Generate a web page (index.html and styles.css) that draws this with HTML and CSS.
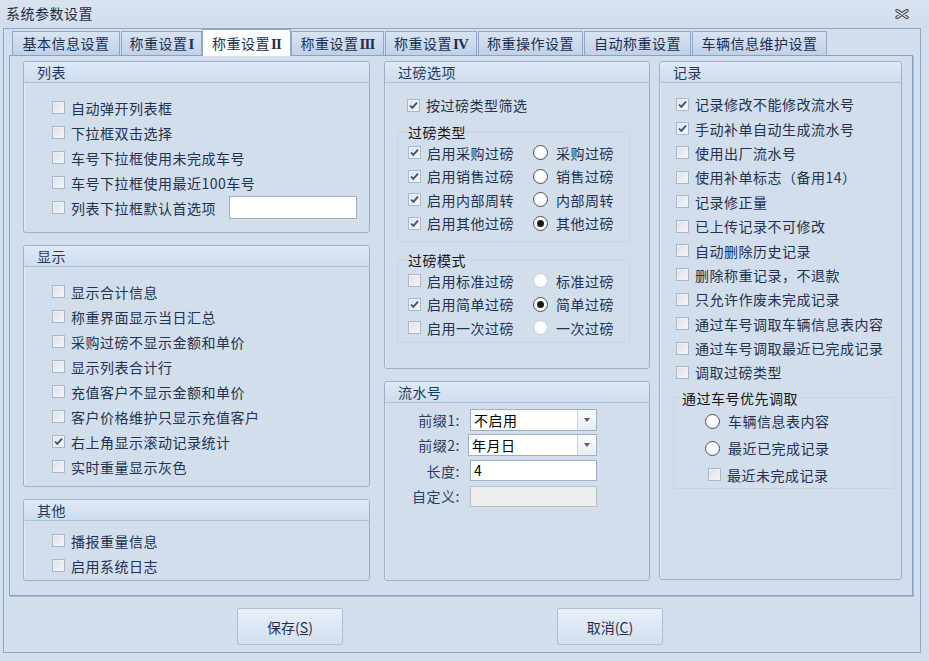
FILE: index.html
```html
<!DOCTYPE html>
<html lang="zh-CN">
<head>
<meta charset="utf-8">
<title>系统参数设置</title>
<link rel="stylesheet" href="styles.css">
</head>
<body>
<div class="titlebar">
  <span class="title">系统参数设置</span>
  <span class="close"><svg viewBox="0 0 14 10" width="14" height="10"><path d="M2 1.5L12 8.5M12 1.5L2 8.5" stroke="#4a4f58" stroke-width="3.4" stroke-linecap="round"/><path d="M2 1.5L12 8.5M12 1.5L2 8.5" stroke="#e4e9f0" stroke-width="1.3" stroke-linecap="round"/></svg></span>
</div>
<div class="frame">
  <div class="tabs">
    <div class="tab t1">基本信息设置</div>
    <div class="tab t2">称重设置<span class="rn">I</span></div>
    <div class="tab t3 active">称重设置<span class="rn">II</span></div>
    <div class="tab t4">称重设置<span class="rn">III</span></div>
    <div class="tab t5">称重设置<span class="rn">IV</span></div>
    <div class="tab t6">称重操作设置</div>
    <div class="tab t7">自动称重设置</div>
    <div class="tab t8">车辆信息维护设置</div>
  </div>
  <div class="page">
    <div class="col c1">
      <section class="grp g-list">
        <div class="grp-h">列表</div>
        <div class="grp-b pl28 pt12">
          <div class="row"><span class="cb"></span>自动弹开列表框</div>
          <div class="row"><span class="cb"></span>下拉框双击选择</div>
          <div class="row"><span class="cb"></span>车号下拉框使用未完成车号</div>
          <div class="row"><span class="cb"></span>车号下拉框使用最近100车号</div>
          <div class="row"><span class="cb"></span>列表下拉框默认首选项<span class="inp list-inp"></span></div>
        </div>
      </section>
      <section class="grp g-show">
        <div class="grp-h">显示</div>
        <div class="grp-b pl28 pt12">
          <div class="row"><span class="cb"></span>显示合计信息</div>
          <div class="row"><span class="cb"></span>称重界面显示当日汇总</div>
          <div class="row"><span class="cb"></span>采购过磅不显示金额和单价</div>
          <div class="row"><span class="cb"></span>显示列表合计行</div>
          <div class="row"><span class="cb"></span>充值客户不显示金额和单价</div>
          <div class="row"><span class="cb"></span>客户价格维护只显示充值客户</div>
          <div class="row"><span class="cb on"><svg viewBox="0 0 11 11"><path d="M2 5.5l2.3 2.4L9 2.6"/></svg></span>右上角显示滚动记录统计</div>
          <div class="row"><span class="cb"></span>实时重量显示灰色</div>
        </div>
      </section>
      <section class="grp g-other">
        <div class="grp-h">其他</div>
        <div class="grp-b pl28 pt7">
          <div class="row"><span class="cb"></span>播报重量信息</div>
          <div class="row"><span class="cb"></span>启用系统日志</div>
        </div>
      </section>
    </div>
    <div class="col c2">
      <section class="grp g-weigh">
        <div class="grp-h">过磅选项</div>
        <div class="grp-b pl22 pt10">
          <div class="row r24"><span class="cb on"><svg viewBox="0 0 11 11"><path d="M2 5.5l2.3 2.4L9 2.6"/></svg></span>按过磅类型筛选</div>
          <fieldset class="sub sub-type">
            <legend>过磅类型</legend>
            <div class="row r23"><span class="opt"><span class="cb on"><svg viewBox="0 0 11 11"><path d="M2 5.5l2.3 2.4L9 2.6"/></svg></span>启用采购过磅</span><span class="rd"></span>采购过磅</div>
            <div class="row r23"><span class="opt"><span class="cb on"><svg viewBox="0 0 11 11"><path d="M2 5.5l2.3 2.4L9 2.6"/></svg></span>启用销售过磅</span><span class="rd"></span>销售过磅</div>
            <div class="row r23"><span class="opt"><span class="cb on"><svg viewBox="0 0 11 11"><path d="M2 5.5l2.3 2.4L9 2.6"/></svg></span>启用内部周转</span><span class="rd"></span>内部周转</div>
            <div class="row r23"><span class="opt"><span class="cb on"><svg viewBox="0 0 11 11"><path d="M2 5.5l2.3 2.4L9 2.6"/></svg></span>启用其他过磅</span><span class="rd on"></span>其他过磅</div>
          </fieldset>
          <fieldset class="sub sub-mode">
            <legend>过磅模式</legend>
            <div class="row r23"><span class="opt"><span class="cb"></span>启用标准过磅</span><span class="rd dis"></span>标准过磅</div>
            <div class="row r23"><span class="opt"><span class="cb on"><svg viewBox="0 0 11 11"><path d="M2 5.5l2.3 2.4L9 2.6"/></svg></span>启用简单过磅</span><span class="rd on"></span>简单过磅</div>
            <div class="row r23"><span class="opt"><span class="cb"></span>启用一次过磅</span><span class="rd dis"></span>一次过磅</div>
          </fieldset>
        </div>
      </section>
      <section class="grp g-serial">
        <div class="grp-h">流水号</div>
        <div class="grp-b sn">
          <label>前缀1:</label>
          <div class="combo"><span class="val">不启用</span><span class="dd"></span></div>
          <label>前缀2:</label>
          <div class="combo shift"><span class="val">年月日</span><span class="dd"></span></div>
          <label>长度:</label>
          <div class="inp">4</div>
          <label>自定义:</label>
          <div class="inp dis"></div>
        </div>
      </section>
    </div>
    <div class="col c3">
      <section class="grp g-rec">
        <div class="grp-h">记录</div>
        <div class="grp-b pl16 pt9">
          <div class="row r24b"><span class="cb on"><svg viewBox="0 0 11 11"><path d="M2 5.5l2.3 2.4L9 2.6"/></svg></span>记录修改不能修改流水号</div>
          <div class="row r24b"><span class="cb on"><svg viewBox="0 0 11 11"><path d="M2 5.5l2.3 2.4L9 2.6"/></svg></span>手动补单自动生成流水号</div>
          <div class="row r24b"><span class="cb"></span>使用出厂流水号</div>
          <div class="row r24b"><span class="cb"></span>使用补单标志（备用14）</div>
          <div class="row r24b"><span class="cb"></span>记录修正量</div>
          <div class="row r24b"><span class="cb"></span>已上传记录不可修改</div>
          <div class="row r24b"><span class="cb"></span>自动删除历史记录</div>
          <div class="row r24b"><span class="cb"></span>删除称重记录，不退款</div>
          <div class="row r24b"><span class="cb"></span>只允许作废未完成记录</div>
          <div class="row r24b"><span class="cb"></span>通过车号调取车辆信息表内容</div>
          <div class="row r24b"><span class="cb"></span>通过车号调取最近已完成记录</div>
          <div class="row r24b"><span class="cb"></span>调取过磅类型</div>
          <fieldset class="sub sub-pref">
            <legend>通过车号优先调取</legend>
            <div class="row r27 ind-r"><span class="rd"></span>车辆信息表内容</div>
            <div class="row r27 ind-r"><span class="rd"></span>最近已完成记录</div>
            <div class="row r26 ind-c"><span class="cb"></span>最近未完成记录</div>
          </fieldset>
        </div>
      </section>
    </div>
  </div>
  <div class="buttons">
    <button class="btn">保存(<u>S</u>)</button>
    <button class="btn">取消(<u>C</u>)</button>
  </div>
</div>
</body>
</html>
```
FILE: styles.css
```css
* { box-sizing: border-box; }
html, body { margin: 0; padding: 0; }
body {
  width: 929px;
  height: 661px;
  overflow: hidden;
  background: #d4dfee;
  font-family: "Noto Sans CJK SC", "Noto Sans", sans-serif;
  font-size: 14px;
  letter-spacing: 0.5px;
  line-height: 18px;
  color: #22324f;
}

.titlebar {
  height: 28px;
  display: flex;
  align-items: center;
  justify-content: space-between;
  padding: 0 20px 2px 6px;
  background: linear-gradient(#d9e3f0, #d2ddec);
}
.title { color: #1e2b44; }
.close { display: flex; width: 14px; height: 10px; margin-top: 1px; }

.frame {
  margin: 0 8px 0 3px;
  height: 625px;
  border: 1px solid #8fa6c6;
  background: #d4dfee;
}

.tabs {
  display: flex;
  align-items: flex-end;
  height: 26px;
  padding-left: 8px;
}
.tab {
  height: 24px;
  margin-right: 1px;
  border: 1px solid #8ea7c8;
  border-bottom: none;
  background: linear-gradient(#d9e4f2, #c0d1e8);
  line-height: 22px;
  text-align: center;
  color: #1d2f4e;
  white-space: nowrap;
}
.t1 { width: 108px; }
.t2 { width: 81px; }
.t3 { width: 89px; margin-right: 0; margin-left: -1px; }
.t4 { width: 93px; }
.t5 { width: 92px; }
.t6 { width: 105px; }
.t7 { width: 107px; }
.t8 { width: 135px; }
.tab.active {
  height: 27px;
  margin-bottom: -1px;
  background: #fff;
  line-height: 26px;
  position: relative;
  z-index: 1;
}
.rn {
  font-family: "Liberation Serif", serif;
  font-weight: bold;
  font-size: 15px;
  letter-spacing: -0.8px;
  margin-left: 1px;
}

.page {
  display: flex;
  margin: 0 7px 0 5px;
  height: 541px;
  padding: 5px 0 0 13px;
  border: 1px solid #8aa2c2;
  box-shadow: 1px 1px 0 #a7bad4;
  background: #d3deed;
}
.col { display: flex; flex-direction: column; gap: 12px; }
.c1 { width: 347px; margin-right: 14px; }
.c2 { width: 266px; margin-right: 9px; }
.c3 { width: 243px; }

.grp {
  border: 1px solid #9db1cd;
  border-radius: 3px;
  background: #d3deed;
  box-shadow: inset 1px 1px 0 #e2eaf5;
}
.grp-h {
  height: 21px;
  line-height: 20px;
  padding-left: 13px;
  border-bottom: 1px solid #aec1da;
  border-radius: 2px 2px 0 0;
  background: linear-gradient(#e0eaf7, #cddcef);
  color: #1f3a5d;
}
.g-list { height: 172px; }
.g-show { height: 242px; }
.g-other { height: 82px; }
.g-weigh { height: 308px; }
.g-serial { height: 200px; }
.g-rec { height: 519px; }

.pl28 { padding-left: 28px; }
.pl22 { padding-left: 22px; }
.pl16 { padding-left: 16px; }
.pt12 { padding-top: 12px; }
.pt10 { padding-top: 10px; }
.pt9 { padding-top: 9px; }
.pt7 { padding-top: 7px; }

.row {
  display: flex;
  align-items: center;
  height: 25px;
  white-space: nowrap;
}
.r24 { height: 24px; }
.r23 { height: 23.5px; }
.r24b { height: 24.4px; }
.r27 { height: 27px; }
.r26 { height: 26px; }
.opt { display: flex; align-items: center; width: 125px; }

.cb {
  flex: none;
  display: flex;
  align-items: center;
  justify-content: center;
  width: 13px;
  height: 13px;
  margin-right: 6px;
  border: 1px solid #aab7c9;
  background: linear-gradient(135deg, #dce1e8, #f6f7f9);
  box-shadow: inset 0 0 0 1px #eef1f5;
}
.cb svg { width: 11px; height: 11px; }
.cb svg path {
  fill: none;
  stroke: #3d4e70;
  stroke-width: 1.8;
}

.rd {
  flex: none;
  display: flex;
  align-items: center;
  justify-content: center;
  width: 15px;
  height: 15px;
  margin-right: 8px;
  border: 1.5px solid #505358;
  border-radius: 50%;
  background: radial-gradient(circle at 40% 35%, #ffffff 45%, #e2e4e8);
}
.rd.on::after {
  content: "";
  width: 7px;
  height: 7px;
  border-radius: 50%;
  background: #1a1a1a;
}
.rd.dis { border-color: #c2cbd8; background: #fbfcfd; }

.sub {
  margin: 0;
  min-width: 0;
  border: 1px solid #c9d5e6;
}
.sub legend {
  padding: 0;
  line-height: 18px;
  color: #141414;
}
.sub-type { width: 233px; margin: 6px 0 0 -10px; padding: 0 0 6px 10px; }
.sub-mode { width: 233px; margin: 9px 0 0 -10px; padding: 0 0 2px 10px; }
.sub-pref { width: 222px; margin: 4px 0 0 -3px; padding: 1px 0 0 8px; }
.ind-r { padding-left: 23px; }
.ind-c { padding-left: 26px; }

.inp {
  height: 21px;
  border: 1px solid #9eb0c8;
  background: #fff;
  padding-left: 3px;
  line-height: 19px;
  color: #000;
}
.inp.dis { background: #efefef; border-color: #b3c0d1; }
.list-inp { width: 128px; height: 23px; margin-left: 13px; }

.sn {
  display: grid;
  grid-template-columns: 75px 127px;
  grid-auto-rows: 22px;
  column-gap: 10px;
  row-gap: 3.4px;
  align-items: center;
  padding-top: 6px;
}
.sn label { text-align: right; color: #2a3f60; }
.combo {
  display: flex;
  height: 22px;
  border: 1px solid #9eb0c8;
  background: #fff;
}
.combo.shift { margin-left: -2px; }
.combo .val { flex: 1; padding-left: 3px; line-height: 20px; color: #000; }
.combo .dd {
  width: 19px;
  display: flex;
  align-items: center;
  justify-content: center;
  border-left: 1px solid #c6d0de;
  background: linear-gradient(#fbfcfd, #e8edf4);
}
.combo .dd::after {
  content: "";
  border-left: 3.5px solid transparent;
  border-right: 3.5px solid transparent;
  border-top: 4px solid #5a5f68;
}

.buttons {
  display: flex;
  gap: 214px;
  margin-top: 12px;
  padding-left: 233px;
}
.btn {
  width: 106px;
  height: 37px;
  border: 1px solid #adbed6;
  border-radius: 2px;
  background: linear-gradient(#e7eff9, #d4e0ef);
  font-family: "Noto Sans CJK SC", "Noto Sans", sans-serif;
  font-size: 14px;
  color: #1e2f4e;
  padding: 0;
}
```
